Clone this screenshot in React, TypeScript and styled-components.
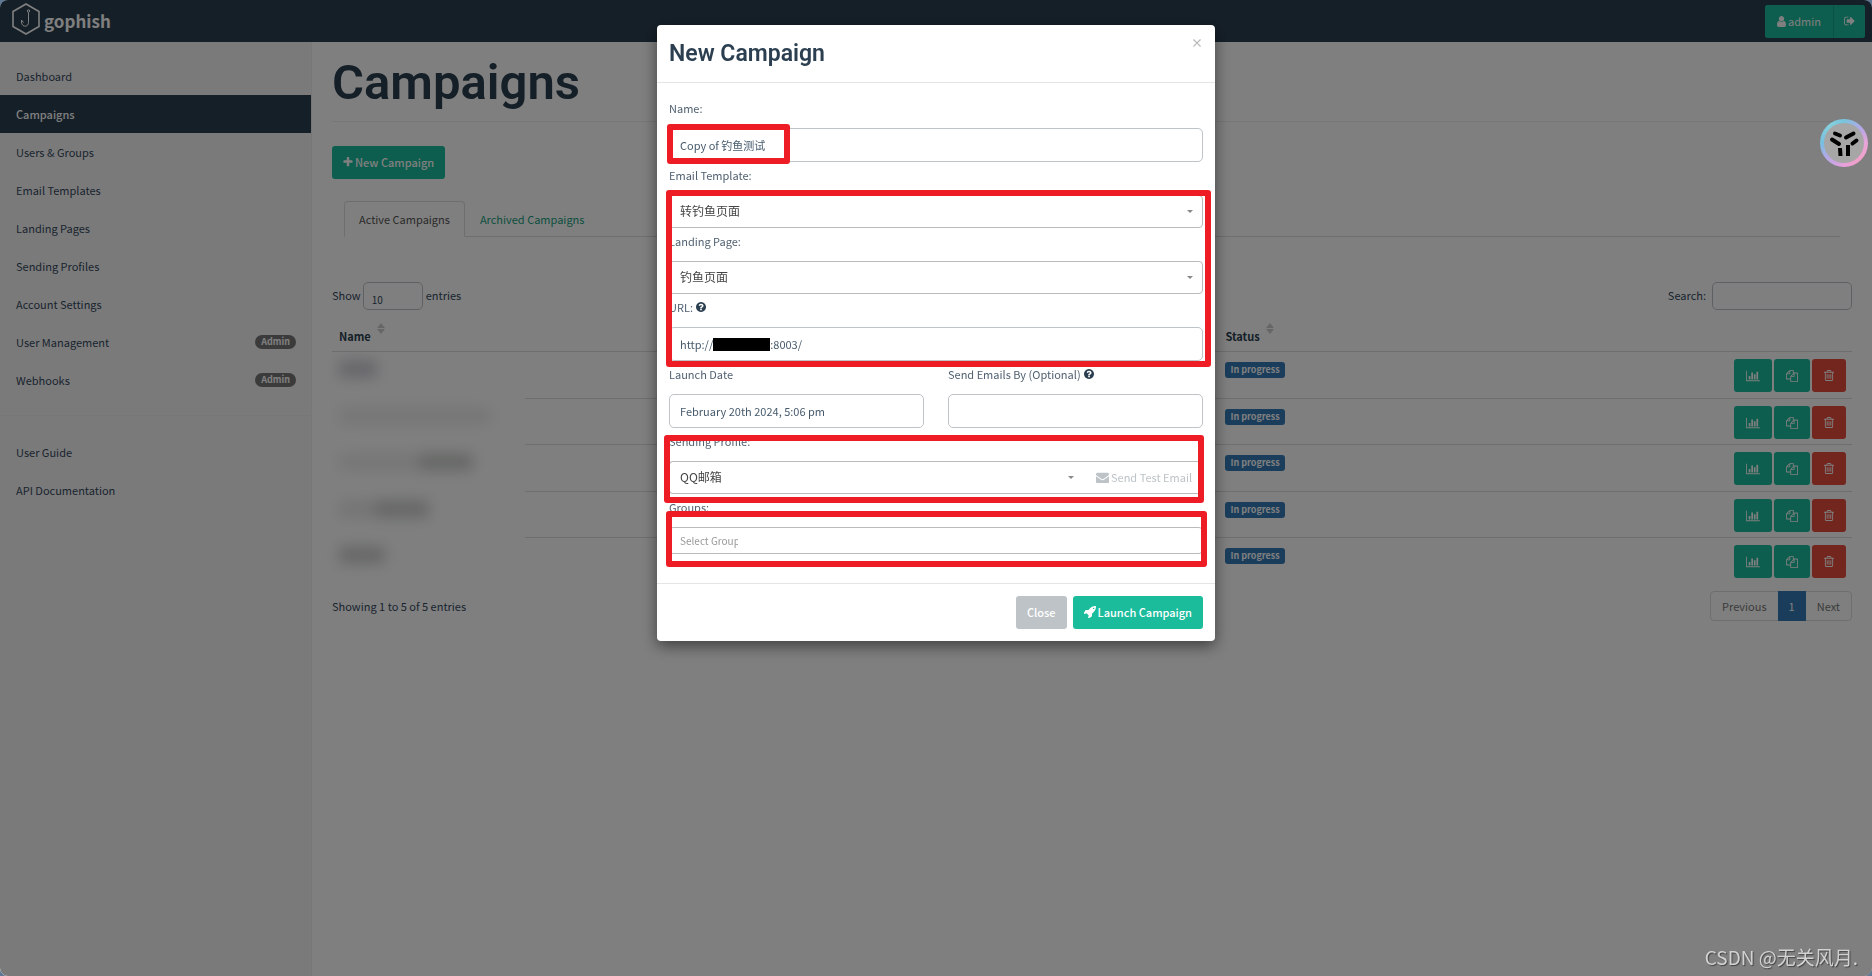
import React from 'react';
import styled, { createGlobalStyle } from 'styled-components';

const GlobalStyle = createGlobalStyle`
  *, *::before, *::after { box-sizing: border-box; }
  html { background: #5f7896; }
  body {
    margin: 0;
    font-family: "Noto Sans CJK SC", "Noto Sans", sans-serif;
    font-size: 11px;
    line-height: 18px;
    color: #34495e;
  }
  button, input, select { font: inherit; color: inherit; margin: 0; }
  a { color: inherit; text-decoration: none; }
`;

/* ---------- icons ---------- */

const ICONS = {
  plus: { box: '128 0 1536 1792', w: 10, d: 'M1600 736v192q0 40-28 68t-68 28h-416v416q0 40-28 68t-68 28h-192q-40 0-68-28t-28-68v-416h-416q-40 0-68-28t-28-68v-192q0-40 28-68t68-28h416v-416q0-40 28-68t68-28h192q40 0 68 28t28 68v416h416q40 0 68 28t28 68z' },
  user: { box: '256 0 1280 1792', w: 9, d: 'M1536 1399q0 109-62.5 187t-150.5 78h-854q-88 0-150.5-78t-62.5-187q0-85 8.5-160.5t31.5-152 58.5-131 94-89 134.5-34.5q131 128 313 128t313-128q76 0 134.5 34.5t94 89 58.5 131 31.5 152 8.5 160.5zm-256-887q0 159-112.5 271.5t-271.5 112.5-271.5-112.5-112.5-271.5 112.5-271.5 271.5-112.5 271.5 112.5 112.5 271.5z' },
  signOut: { box: '64 0 1600 1792', w: 11, d: 'M704 1440q0 4 1 20t.5 26.5-3 23.5-10 19.5-20.5 6.5h-320q-119 0-203.5-84.5t-84.5-203.5v-704q0-119 84.5-203.5t203.5-84.5h320q13 0 22.5 9.5t9.5 22.5q0 4 1 20t.5 26.5-3 23.5-10 19.5-20.5 6.5h-320q-66 0-113 47t-47 113v704q0 66 47 113t113 47h312l11.5 1 11.5 3 8 5.5 7 9 2 13.5zm928-544q0 26-19 45l-544 544q-19 19-45 19t-45-19-19-45v-288h-448q-26 0-45-19t-19-45v-384q0-26 19-45t45-19h448v-288q0-26 19-45t45-19 45 19l544 544q19 19 19 45z' },
  chart: { box: '0 0 2048 1792', w: 14, d: 'M640 896v512h-256v-512h256zm384-512v1024h-256v-1024h256zm1024 1152v128h-2048v-1536h128v1408h1920zm-640-896v768h-256v-768h256zm384-384v1152h-256v-1152h256z' },
  copy: { box: '0 0 1792 1792', w: 12, d: 'M1696 384q40 0 68 28t28 68v1216q0 40-28 68t-68 28h-960q-40 0-68-28t-28-68v-288h-544q-40 0-68-28t-28-68v-672q0-40 20-88t48-76l408-408q28-28 76-48t88-20h416q40 0 68 28t28 68v328q68-40 128-40h416zm-544 213l-299 299h299v-299zm-640-384l-299 299h299v-299zm196 647l316-316v-416h-384v416q0 40-28 68t-68 28h-416v640h512v-256q0-40 20-88t48-76zm956 804v-1152h-384v416q0 40-28 68t-68 28h-416v640h896z' },
  trash: { box: '192 0 1408 1792', w: 10, d: 'M704 736v576q0 14-9 23t-23 9h-64q-14 0-23-9t-9-23v-576q0-14 9-23t23-9h64q14 0 23 9t9 23zm256 0v576q0 14-9 23t-23 9h-64q-14 0-23-9t-9-23v-576q0-14 9-23t23-9h64q14 0 23 9t9 23zm256 0v576q0 14-9 23t-23 9h-64q-14 0-23-9t-9-23v-576q0-14 9-23t23-9h64q14 0 23 9t9 23zm128 724v-948h-896v948q0 22 7 40.5t14.5 27 10.5 8.5h832q3 0 10.5-8.5t14.5-27 7-40.5zm-672-1076h448l-48-117q-7-9-17-11h-317q-10 2-17 11zm928 32v64q0 14-9 23t-23 9h-96v948q0 83-47 143.5t-113 60.5h-832q-66 0-113-58.5t-47-141.5v-952h-96q-14 0-23-9t-9-23v-64q0-14 9-23t23-9h309l70-167q15-37 54-63t79-26h320q40 0 79 26t54 63l70 167h309q14 0 23 9t9 23z' },
  question: { box: '128 128 1536 1536', w: 10, d: 'M1024 1376v-192q0-14-9-23t-23-9h-192q-14 0-23 9t-9 23v192q0 14 9 23t23 9h192q14 0 23-9t9-23zm256-672q0-88-55.5-163t-138.5-116-170-41q-243 0-371 213-15 24 8 42l132 100q7 6 19 6 16 0 25-12 53-68 86-92 34-24 86-24 48 0 85.5 26t37.5 59q0 38-20 61t-68 45q-63 28-115.5 86.5t-52.5 125.5v36q0 14 9 23t23 9h192q14 0 23-9t9-23q0-19 21.5-49.5t54.5-49.5q32-18 49-28.5t46-35 44.5-48 28-60.5 12.5-81zm384 192q0 209-103 385.5t-279.5 279.5-385.5 103-385.5-103-279.5-279.5-103-385.5 103-385.5 279.5-279.5 385.5-103 385.5 103 279.5 279.5 103 385.5z' },
  envelope: { box: '0 0 1792 1792', w: 13, d: 'M1792 710v794q0 66-47 113t-113 47h-1472q-66 0-113-47t-47-113v-794q44 49 101 87 362 246 497 345 57 42 92.5 65.5t94.5 48 110 24.5h2q51 0 110-24.5t94.5-48 92.5-65.5q170-123 498-345 57-39 100-87zm0-294q0 79-49 151t-122 123q-376 261-468 325-10 7-42.5 31t-54 38.5-52 32.5-57.5 27-50 9h-2q-23 0-50-9t-57.5-27-52-32.5-54-38.5-42.5-31q-91-64-262-182.5t-205-142.5q-62-42-117-115.5t-55-136.5q0-78 41.5-130t118.5-52h1472q65 0 112.5 47t47.5 113z' },
  rocket: { box: '64 128 1600 1600', w: 12, d: 'M1440 448q0-40-28-68t-68-28-68 28-28 68 28 68 68 28 68-28 28-68zm224-288q0 249-75.5 430.5t-253.5 360.5q-81 80-195 176l-20 379q-2 16-16 26l-384 224q-7 4-16 4-12 0-23-9l-64-64q-13-14-8-32l85-276-281-281-276 85q-3 1-9 1-14 0-23-9l-64-64q-17-19-5-39l224-384q10-14 26-16l379-20q96-114 176-195 188-187 358-258t431-71q14 0 24 9.5t10 22.5z' },
} as const;

type IconName = keyof typeof ICONS;

const IconSvg = styled.svg`
  display: block;
  flex: none;
  fill: currentColor;
`;

const Icon = ({ name }: { name: IconName }) => {
  const { box, w, d } = ICONS[name];
  const [, , bw, bh] = box.split(' ').map(Number);
  return (
    <IconSvg width={w} height={Math.round((w * bh) / bw)} viewBox={box} aria-hidden="true">
      <path d={d} />
    </IconSvg>
  );
};

/* ---------- page frame ---------- */

const Page = styled.div`
  min-height: 100vh;
  display: flex;
  flex-direction: column;
  background: #fff;
  border-radius: 8px;
  overflow: hidden;
`;

const Navbar = styled.header`
  height: 42px;
  padding: 0 7px 0 12px;
  display: flex;
  align-items: center;
  justify-content: space-between;
  background: #2b3f50;
`;

const Brand = styled.a`
  display: flex;
  align-items: center;
  gap: 4px;
  height: 38px;
  align-self: flex-start;
  color: #fff;
  font-size: 17px;
  font-weight: 700;
  line-height: 24px;

  span { padding-top: 4px; }
`;

const Button = styled.button<{ $tone?: 'primary' | 'danger' | 'muted' }>`
  height: 33px;
  padding: 0 11px 1px;
  display: inline-flex;
  align-items: center;
  justify-content: center;
  gap: 2px;
  border: 0;
  border-radius: 3px;
  color: #fff;
  font-weight: 500;
  line-height: 18px;
  white-space: nowrap;
  background: ${({ $tone }) =>
    $tone === 'danger' ? '#e74c3c' : $tone === 'muted' ? '#bdc3c7' : '#1abc9c'};
`;

const ButtonGroup = styled.div`
  display: flex;
  gap: 1px;
  background: #18a589;
  border-radius: 3px;

  ${Button} { font-weight: 400; padding: 0 12px; }
  ${Button}:first-child { border-radius: 3px 0 0 3px; }
  ${Button}:last-child { border-radius: 0 3px 3px 0; padding: 0 10px; }
`;

const Columns = styled.div`
  flex: 1;
  display: flex;
`;

const Sidebar = styled.nav`
  flex: none;
  width: 312px;
  padding-top: 15px;
  background: #f5f5f5;
  border-right: 1px solid #eee;

  ul { list-style: none; margin: 0; padding: 0; }
  ul + ul { margin-top: 16px; padding-top: 17px; border-top: 1px solid #eee; }
`;

const NavLink = styled.a<{ $active?: boolean }>`
  height: 38px;
  padding: 0 15px 0 16px;
  display: flex;
  align-items: center;
  justify-content: space-between;
  color: ${({ $active }) => ($active ? '#fff' : '#34495e')};
  font-weight: ${({ $active }) => ($active ? 500 : 400)};
  background: ${({ $active }) => ($active ? '#2b3f50' : 'transparent')};
`;

const Badge = styled.span`
  height: 14px;
  padding: 0 6px;
  border-radius: 8px;
  background: #777;
  color: #fff;
  font-size: 9px;
  font-weight: 700;
  line-height: 13px;
`;

const Main = styled.main`
  flex: 1;
  min-width: 0;
  padding: 14px 20px 40px;
`;

const PageHeader = styled.div`
  margin-right: 12px;
  padding-bottom: 12px;
  border-bottom: 1px solid #eee;

  h1 {
    margin: 0;
    font-family: Roboto, sans-serif;
    font-size: 49px;
    font-weight: 600;
    line-height: 53px;
    color: #2b3f50;
  }
`;

const PageActions = styled.div`
  margin-top: 24px;
`;

const Tabs = styled.div`
  display: flex;
  height: 36px;
  margin: 22px 12px 0;
  border-bottom: 1px solid #ddd;
`;

const Tab = styled.button<{ $active?: boolean }>`
  height: 36px;
  padding: 0 14px;
  border: 1px solid ${({ $active }) => ($active ? '#ddd' : 'transparent')};
  border-bottom-color: ${({ $active }) => ($active ? '#fff' : 'transparent')};
  border-radius: 4px 4px 0 0;
  background: ${({ $active }) => ($active ? '#fff' : 'transparent')};
  color: ${({ $active }) => ($active ? '#555' : '#18a080')};
`;

const TableTools = styled.div`
  margin-top: 45px;
  height: 28px;
  display: flex;
  justify-content: space-between;

  label { display: flex; align-items: center; }
  span { padding-bottom: 2px; }
`;

const fieldBorder = `
  border: 1px solid #bdc3c7;
  border-radius: 5px;
  background: #fff;
  outline: 0;
`;

const LengthSelect = styled.select`
  ${fieldBorder}
  width: 60px;
  height: 28px;
  margin: 0 3px 0 2px;
  padding: 8px 8px 0;
  appearance: none;
  font-size: 10px;
  line-height: 18px;
`;

const SearchInput = styled.input`
  ${fieldBorder}
  width: 140px;
  height: 28px;
  margin-left: 6px;
  padding: 0 8px;
`;

const DataTable = styled.table`
  width: 100%;
  margin-top: 10px;
  table-layout: fixed;
  border-collapse: separate;
  border-spacing: 0;

  th {
    height: 31px;
    padding: 0 7px;
    text-align: left;
    font-weight: 700;
    color: #2b3f50;
  }
  tbody tr:nth-child(odd) { height: 47px; }
  tbody tr:nth-child(even) { height: 46px; }
  td {
    padding: 7px 6px 0 7px;
    vertical-align: top;
    border-top: 1px solid #ddd;
  }
  tbody tr:not(:first-child) td:first-child { border-top-color: transparent; }
`;

const Col = styled.col<{ $width?: string }>`
  width: ${({ $width }) => $width ?? 'auto'};
`;

const HeadLabel = styled.span`
  display: flex;
  align-items: center;
  gap: 6px;

  svg { margin-bottom: 14px; }
`;

const SortMark = () => (
  <svg width="8" height="11" viewBox="0 0 8 11" fill="#ccc" aria-hidden="true">
    <path d="M0 5L4 0L8 5ZM0 6L4 11L8 6Z" />
  </svg>
);

const HiddenName = styled.div`
  display: flex;
  height: 18px;
  margin-top: 1px;
  filter: blur(7px);
`;

const Smudge = styled.i<{ $width: number; $shade: string }>`
  width: ${({ $width }) => $width}px;
  background: ${({ $shade }) => $shade};
`;

const StatusLabel = styled.span`
  display: inline-block;
  margin-top: 3px;
  height: 16px;
  padding: 0 5px;
  border-radius: 3px;
  background: #337ab7;
  color: #fff;
  font-size: 9px;
  font-weight: 700;
  line-height: 15px;
`;

const RowActions = styled.div`
  display: flex;
  justify-content: flex-end;
  gap: 2px;

  ${Button} { padding: 0 12px; }
`;

const TableFooter = styled.div`
  margin-top: 7px;
  display: flex;
  align-items: center;
  justify-content: space-between;
`;

const Pager = styled.div`
  display: flex;
  border: 1px solid #ddd;
  border-radius: 4px;
`;

const PageButton = styled.button<{ $current?: boolean }>`
  height: 28px;
  padding: 0 11px;
  border: 0;
  color: ${({ $current }) => ($current ? '#fff' : '#777')};
  background: ${({ $current }) => ($current ? '#337ab7' : 'transparent')};
  box-shadow: ${({ $current }) => ($current ? '0 1px #337ab7, 0 -1px #337ab7' : 'none')};
`;

/* ---------- dialog ---------- */

const Backdrop = styled.div`
  position: fixed;
  inset: 0;
  padding: 25px 16px;
  display: flex;
  justify-content: center;
  align-items: flex-start;
  background: rgba(0, 0, 0, 0.5);
  overflow: auto;
  border-radius: 8px;
`;

const Dialog = styled.div`
  position: relative;
  width: 100%;
  max-width: 558px;
  background: #fff;
  border-radius: 4px;
  box-shadow: 0 5px 15px rgba(0, 0, 0, 0.5);
`;

const DialogHeader = styled.div`
  height: 58px;
  padding: 12px;
  display: flex;
  justify-content: space-between;
  align-items: flex-start;
  border-bottom: 1px solid #e5e5e5;

  h2 {
    margin: 0;
    padding-top: 2px;
    font-family: Roboto, sans-serif;
    font-size: 23px;
    font-weight: 600;
    line-height: 30px;
    color: #2b3f50;
  }
`;

const CloseX = styled.button`
  padding: 0;
  border: 0;
  background: none;
  color: #bbb;
  font-size: 12px;
  font-weight: 700;
  line-height: 12px;
`;

const DialogBody = styled.form`
  padding: 12px 12px 29px;
`;

const Label = styled.label`
  display: flex;
  align-items: center;
  gap: 3px;
  height: 33px;
  padding-bottom: 7px;
  white-space: nowrap;
  color: #506070;

  svg { color: #2b3f50; }
`;

const TextInput = styled.input`
  ${fieldBorder}
  display: block;
  width: 100%;
  height: 34px;
  padding: 0 10px 1px;
  color: #465a6c;
`;

const UrlField = styled.div`
  ${fieldBorder}
  display: flex;
  align-items: center;
  height: 34px;
  padding: 0 10px;
  color: #465a6c;

  input { flex: 1; min-width: 0; padding: 0; border: 0; outline: 0; background: none; }
`;

const Redaction = styled.span`
  width: 57px;
  height: 13px;
  background: #000;
`;

const SelectBox = styled.div`
  position: relative;
  flex: 1;

  &::after {
    content: "";
    position: absolute;
    right: 10px;
    top: 15px;
    border: 3px solid transparent;
    border-top-color: #888;
    border-bottom: 0;
  }
`;

const SelectInput = styled.select`
  display: block;
  width: 100%;
  height: 33px;
  padding: 0 10px 2px;
  border: 1px solid #bbb;
  border-radius: 4px;
  background: #fff;
  color: #444;
  font-size: 12px;
  appearance: none;
  outline: 0;
`;

const TwoUp = styled.div`
  display: grid;
  grid-template-columns: 1fr 1fr;
  gap: 24px;
`;

const InputGroup = styled.div`
  display: flex;

  ${SelectInput} { border-right: 0; border-radius: 4px 0 0 4px; }
`;

const TestButton = styled.button`
  height: 33px;
  width: 119px;
  padding: 0 0 1px 12px;
  display: flex;
  align-items: center;
  gap: 2px;
  border: 1px solid #bbb;
  border-left: 0;
  border-radius: 0 4px 4px 0;
  background: #fff;
  color: #bdc3c7;
  white-space: nowrap;
`;

const TagField = styled.div`
  height: 27px;
  padding: 0 10px;
  display: flex;
  align-items: center;
  border: 1px solid #bbb;
  border-radius: 4px;

  input {
    width: 58px;
    padding: 0;
    border: 0;
    outline: 0;
    font-size: 10px;
    background: none;
  }
  input::placeholder { color: #999; opacity: 1; }
`;

const DialogFooter = styled.div`
  padding: 12px;
  display: flex;
  justify-content: flex-end;
  gap: 6px;
  border-top: 1px solid #e5e5e5;
`;

/* red frames that call out parts of the dialog */
const Callout = styled.div<{ $left: number; $top: number; $right: number; $height: number }>`
  position: absolute;
  left: ${({ $left }) => $left}px;
  top: ${({ $top }) => $top}px;
  right: ${({ $right }) => $right}px;
  height: ${({ $height }) => $height}px;
  border: 6px solid #ee1c25;
  border-radius: 3px;
  pointer-events: none;
`;

const Floating = styled.button`
  position: fixed;
  top: 119px;
  right: 4px;
  width: 48px;
  height: 48px;
  padding: 4px;
  border: 0;
  border-radius: 50%;
  background: conic-gradient(from 0deg, #78c4dc, #b4a8e6 50deg, #e8a4d8 90deg, #f0a0c8 140deg, #e8a0dc 180deg, #b4a8e6 230deg, #78bfe0 270deg, #86d0dc 320deg, #78c4dc);

  svg { display: block; border-radius: 50%; background: #a6a6a6; }
`;

const Watermark = styled.div`
  position: fixed;
  right: 14px;
  bottom: 5px;
  font-size: 19px;
  line-height: 28px;
  font-weight: 400;
  color: #d2d2d2;
  text-shadow: 1px 1px 1px #444;
`;

/* ---------- data ---------- */

const NAV: { label: string; admin?: boolean }[] = [
  { label: 'Dashboard' },
  { label: 'Campaigns' },
  { label: 'Users & Groups' },
  { label: 'Email Templates' },
  { label: 'Landing Pages' },
  { label: 'Sending Profiles' },
  { label: 'Account Settings' },
  { label: 'User Management', admin: true },
  { label: 'Webhooks', admin: true },
];

const ROWS: [number, string][][] = [
  [[38, '#cfcfd8']],
  [[152, '#eceeed']],
  [[80, '#eceeed'], [54, '#cdd1ce']],
  [[36, '#e8eae9'], [54, '#cdd1ce']],
  [[46, '#cdd1ce']],
];

const Sort = ({ children }: { children: React.ReactNode }) => (
  <HeadLabel>
    {children}
    <SortMark />
  </HeadLabel>
);

export default function App() {
  return (
    <>
      <GlobalStyle />
      <Page>
        <Navbar>
          <Brand href="#">
            <svg width="28" height="32" viewBox="0 0 28 32" fill="none" stroke="#fff" aria-hidden="true">
              <path d="M14 1L27 8.500V23.500L14 31L1 23.500V8.500Z" strokeWidth="1.600" />
              <circle cx="16.500" cy="8" r="1.200" strokeWidth="1" />
              <path d="M16.500 9.500V19.500C16.500 24.500 9.500 24.500 9.500 19L9.500 17L11.500 19.500" strokeWidth="1" />
            </svg>
            <span>gophish</span>
          </Brand>
          <ButtonGroup>
            <Button><Icon name="user" />admin</Button>
            <Button aria-label="Sign out"><Icon name="signOut" /></Button>
          </ButtonGroup>
        </Navbar>
        <Columns>
          <Sidebar>
            <ul>
              {NAV.map(({ label, admin }) => (
                <li key={label}>
                  <NavLink href="#" $active={label === 'Campaigns'}>
                    {label}
                    {admin && <Badge>Admin</Badge>}
                  </NavLink>
                </li>
              ))}
            </ul>
            <ul>
              <li><NavLink href="#">User Guide</NavLink></li>
              <li><NavLink href="#">API Documentation</NavLink></li>
            </ul>
          </Sidebar>
          <Main>
            <PageHeader><h1>Campaigns</h1></PageHeader>
            <PageActions>
              <Button><Icon name="plus" />New Campaign</Button>
            </PageActions>
            <Tabs>
              <Tab $active>Active Campaigns</Tab>
              <Tab>Archived Campaigns</Tab>
            </Tabs>
            <TableTools>
              <label>
                <span>Show</span>
                <LengthSelect defaultValue="10"><option>10</option></LengthSelect>
                <span>entries</span>
              </label>
              <label>
                <span>Search:</span>
                <SearchInput type="search" />
              </label>
            </TableTools>
            <DataTable>
              <colgroup>
                <Col $width="193px" />
                <Col />
                <Col $width="33%" />
                <Col $width="132px" />
              </colgroup>
              <thead>
                <tr>
                  <th><Sort>Name</Sort></th>
                  <th />
                  <th><Sort>Status</Sort></th>
                  <th />
                </tr>
              </thead>
              <tbody>
                {ROWS.map((parts, i) => (
                  <tr key={i}>
                    <td>
                      <HiddenName>
                        {parts.map(([width, shade], n) => (
                          <Smudge key={n} $width={width} $shade={shade} />
                        ))}
                      </HiddenName>
                    </td>
                    <td />
                    <td><StatusLabel>In progress</StatusLabel></td>
                    <td>
                      <RowActions>
                        <Button aria-label="View results"><Icon name="chart" /></Button>
                        <Button aria-label="Copy campaign"><Icon name="copy" /></Button>
                        <Button $tone="danger" aria-label="Delete campaign"><Icon name="trash" /></Button>
                      </RowActions>
                    </td>
                  </tr>
                ))}
              </tbody>
            </DataTable>
            <TableFooter>
              <span>Showing 1 to 5 of 5 entries</span>
              <Pager>
                <PageButton>Previous</PageButton>
                <PageButton $current>1</PageButton>
                <PageButton>Next</PageButton>
              </Pager>
            </TableFooter>
          </Main>
        </Columns>
      </Page>

      <Backdrop>
        <Dialog role="dialog" aria-labelledby="dialog-title">
          <DialogHeader>
            <h2 id="dialog-title">New Campaign</h2>
            <CloseX aria-label="Close dialog">×</CloseX>
          </DialogHeader>
          <DialogBody>
            <Label htmlFor="name">Name:</Label>
            <TextInput id="name" defaultValue="Copy of 钓鱼测试" />
            <Label htmlFor="template">Email Template:</Label>
            <SelectBox>
              <SelectInput id="template"><option>转钓鱼页面</option></SelectInput>
            </SelectBox>
            <Label htmlFor="page">Landing Page:</Label>
            <SelectBox>
              <SelectInput id="page"><option>钓鱼页面</option></SelectInput>
            </SelectBox>
            <Label htmlFor="url">URL: <Icon name="question" /></Label>
            <UrlField>
              http://
              <Redaction />
              <input id="url" defaultValue=":8003/" />
            </UrlField>
            <TwoUp>
              <div>
                <Label htmlFor="launch">Launch Date</Label>
                <TextInput id="launch" defaultValue="February 20th 2024, 5:06 pm" />
              </div>
              <div>
                <Label htmlFor="sendby">Send Emails By (Optional) <Icon name="question" /></Label>
                <TextInput id="sendby" />
              </div>
            </TwoUp>
            <Label htmlFor="profile">Sending Profile:</Label>
            <InputGroup>
              <SelectBox>
                <SelectInput id="profile"><option>QQ邮箱</option></SelectInput>
              </SelectBox>
              <TestButton type="button"><Icon name="envelope" />Send Test Email</TestButton>
            </InputGroup>
            <Label htmlFor="groups">Groups:</Label>
            <TagField>
              <input id="groups" placeholder="Select Group" />
            </TagField>
          </DialogBody>
          <DialogFooter>
            <Button $tone="muted">Close</Button>
            <Button><Icon name="rocket" />Launch Campaign</Button>
          </DialogFooter>
          <Callout $left={10} $top={99} $right={425} $height={40} />
          <Callout $left={9} $top={165} $right={4} $height={177} />
          <Callout $left={7} $top={410} $right={11} $height={68} />
          <Callout $left={9} $top={486} $right={8} $height={56} />
        </Dialog>
      </Backdrop>

      <Floating aria-label="Assistant">
        <svg width="40" height="40" viewBox="0 0 40 40" stroke="#000" strokeWidth="4" strokeLinecap="round" fill="none" aria-hidden="true">
          <path d="M11 10.500L16 12.500M22 14.500L29.500 10.500M8 16.500L15 21M28.500 20.500L32.500 17.500" />
          <path d="M16 25L16.500 33M24 22V33" strokeLinecap="butt" />
        </svg>
      </Floating>
      <Watermark>CSDN @无关风月.</Watermark>
    </>
  );
}
